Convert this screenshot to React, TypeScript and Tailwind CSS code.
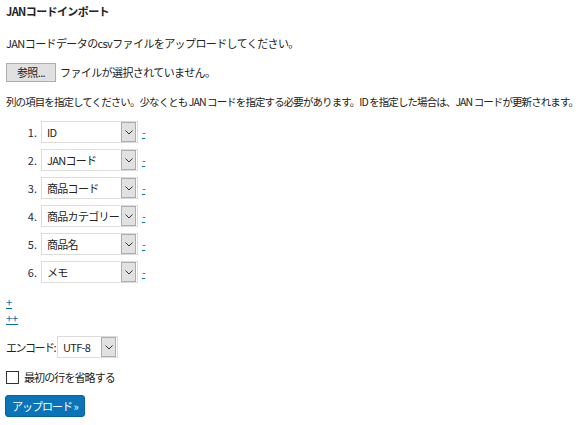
const columns = ["ID", "JANコード", "商品コード", "商品カテゴリー", "商品名", "メモ"];

const font = { fontFamily: '"Noto Sans CJK JP", "Noto Sans", sans-serif' };

const Arrow = () => (
  <span className="flex h-[20px] w-[15px] shrink-0 items-center justify-center border border-[#adadad] bg-[#e1e1e1]">
    <svg width="8" height="5" viewBox="0 0 8 5" fill="none">
      <path d="M0.5 0.5 L4 4 L7.5 0.5" stroke="#333" strokeWidth="1" />
    </svg>
  </span>
);

const FakeSelect = ({ value, width }: { value: string; width: string }) => (
  <div className={`flex h-[22px] ${width} items-center border border-[#dcdcdc] bg-white pl-[5px] pr-px`}>
    <span className="flex-1 whitespace-nowrap leading-[14px] tracking-[-0.7px] text-[#222]">{value}</span>
    <Arrow />
  </div>
);

export default function App() {
  return (
    <div className="h-[425px] w-[580px] overflow-hidden bg-white px-[6px] pt-[4px] text-[11px] tracking-[-0.6px] text-[#222]" style={font}>
      {/* Title */}
      <h2 className="text-[11px] font-bold leading-[14px]">JANコードインポート</h2>

      <p className="mt-[18px] leading-[14px]">JANコードデータのcsvファイルをアップロードしてください。</p>

      {/* File input */}
      <div className="mt-[13px] flex items-center gap-[4px]">
        <span className="flex h-[19px] w-[50px] items-center justify-center border border-[#adadad] bg-[#e1e1e1] leading-none">
          参照...
        </span>
        <span className="leading-none">ファイルが選択されていません。</span>
      </div>

      <p className="mt-[13px] whitespace-nowrap text-[10.5px] leading-[14px] tracking-[-0.92px]">
        列の項目を指定してください。少なくとも JAN コードを指定する必要があります。ID を指定した場合は、JAN コードが更新されます。
      </p>

      {/* Column list */}
      <ol className="mt-[12px] flex flex-col gap-[6px] pl-[17px]">
        {columns.map((c, i) => (
          <li key={c} className="flex items-center">
            <span className="w-[14px] text-right text-[11px] tracking-normal text-[#1d2b4a]">{i + 1}.</span>
            <span className="ml-[4px]">
              <FakeSelect value={c} width="w-[97px]" />
            </span>
            <a className="ml-[4px] text-[11px] leading-none text-[#0073aa] underline">-</a>
          </li>
        ))}
      </ol>

      {/* Add links */}
      <div className="mt-[11px] flex flex-col text-[11px] leading-[16px] tracking-normal text-[#0073aa]">
        <a className="underline">+</a>
        <a className="underline">++</a>
      </div>

      {/* Encoding */}
      <div className="mt-[10px] flex items-center gap-[2px]">
        <span className="tracking-[-1.5px]">エンコード:</span>
        <FakeSelect value="UTF-8" width="w-[61px]" />
      </div>

      {/* Skip first row */}
      <label className="mt-[13px] flex items-center gap-[5px]">
        <span className="h-[13px] w-[13px] border border-[#333] bg-white" />
        <span className="leading-none tracking-[-0.9px]">最初の行を省略する</span>
      </label>

      <button className="-ml-px mt-[11px] h-[22px] whitespace-nowrap rounded-[3px] border border-[#006799] bg-[#0b74b8] px-[6px] text-[11px] leading-none tracking-[-1px] text-white">
        アップロード »
      </button>
    </div>
  );
}
